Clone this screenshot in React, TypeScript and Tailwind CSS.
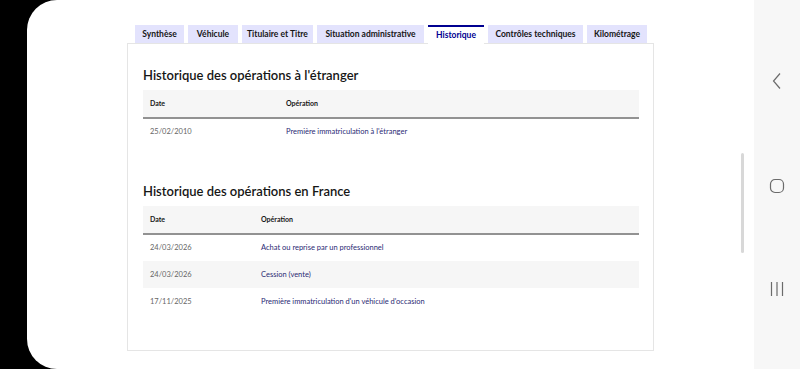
import React from 'react';

const tabs = [
  { label: 'Synthèse', w: 'w-[49px]' },
  { label: 'Véhicule', w: 'w-[50px]' },
  { label: 'Titulaire et Titre', w: 'w-[71px]' },
  { label: 'Situation administrative', w: 'w-[107px]' },
  { label: 'Historique', w: 'w-[56px]' },
  { label: 'Contrôles techniques', w: 'w-[95px]' },
  { label: 'Kilométrage', w: 'w-[60px]' },
];

interface Operation {
  date: string;
  label: string;
}

const foreignOps: Operation[] = [{ date: '25/02/2010', label: "Première immatriculation à l'étranger" }];

const franceOps: Operation[] = [
  { date: '24/03/2026', label: 'Achat ou reprise par un professionnel' },
  { date: '24/03/2026', label: 'Cession (vente)' },
  { date: '17/11/2025', label: "Première immatriculation d'un véhicule d'occasion" },
];

const OpsTable: React.FC<{ rows: Operation[]; dateCol: string }> = ({ rows, dateCol }) => (
  <table className="w-full table-fixed border-collapse text-left">
    <colgroup>
      <col className={dateCol} />
      <col />
    </colgroup>
    <thead>
      <tr className="bg-[#f6f6f6] border-b-2 border-[#929292] h-[28px]">
        <th className="pl-[7px] text-[7px] font-bold text-[#161616]">Date</th>
        <th className="text-[7px] font-bold text-[#161616]">Opération</th>
      </tr>
    </thead>
    <tbody>
      {rows.map((row, i) => (
        <tr key={i} className={`h-[27px] ${i % 2 === 1 ? 'bg-[#f6f6f6]' : 'bg-white'}`}>
          <td className="pl-[7px] text-[7.5px] text-[#666666]">{row.date}</td>
          <td className="text-[7.5px] text-[#2a2a74]">{row.label}</td>
        </tr>
      ))}
    </tbody>
  </table>
);

export default function App() {
  return (
    <div
      className="flex w-[800px] h-[369px] bg-black overflow-hidden"
      style={{ fontFamily: 'Lato, "Open Sans", sans-serif' }}
    >
      <div className="w-[27px] shrink-0" />

      {/* Screen */}
      <div className="relative flex-1 bg-white rounded-l-[30px] pl-[100px] pt-[25px]">
        <div className="w-[527px]">
          {/* Tabs */}
          <div className="flex gap-[4px] pl-[8px]">
            {tabs.map((t) =>
              t.label === 'Historique' ? (
                <div
                  key={t.label}
                  className={`${t.w} h-[19px] flex items-center justify-center whitespace-nowrap bg-white border-t-2 border-[#000091] text-[8.5px] font-bold text-[#000091] -mb-px relative z-10`}
                >
                  {t.label}
                </div>
              ) : (
                <div
                  key={t.label}
                  className={`${t.w} h-[18px] flex items-center justify-center whitespace-nowrap bg-[#e3e3fd] text-[8.5px] font-bold text-[#161616]`}
                >
                  {t.label}
                </div>
              )
            )}
          </div>

          {/* Panel */}
          <div className="border border-[#e5e5e5] h-[308px] px-[15px] pt-[20px]">
            <h2 className="text-[13px] font-semibold text-[#161616] leading-[22px]">
              Historique des opérations à l'étranger
            </h2>
            <div className="mt-[4px] mr-[-1px]">
              <OpsTable rows={foreignOps} dateCol="w-[143px]" />
            </div>

            <h2 className="mt-[35px] text-[13px] font-semibold text-[#161616] leading-[22px]">
              Historique des opérations en France
            </h2>
            <div className="mt-[4px] mr-[-1px]">
              <OpsTable rows={franceOps} dateCol="w-[118px]" />
            </div>
          </div>
        </div>

        {/* scrollbar */}
        <div className="absolute left-[714px] top-[153px] w-[3px] h-[100px] rounded-full bg-[#d8d8d8]" />
      </div>

      {/* Android nav bar */}
      <div className="w-[46px] shrink-0 bg-[#f7f7f7] flex flex-col items-center justify-between py-[72px]">
        <svg width="12" height="18" viewBox="0 0 12 18" fill="none" stroke="#6b6b6b" strokeWidth="1.2">
          <path d="M9 1.5 L2.5 9 L9 16.5" />
        </svg>
        <svg width="16" height="16" viewBox="0 0 16 16" fill="none" stroke="#6b6b6b" strokeWidth="1.2">
          <rect x="1.5" y="1.5" width="13" height="13" rx="4.5" />
        </svg>
        <svg width="16" height="16" viewBox="0 0 16 16" fill="none" stroke="#6b6b6b" strokeWidth="1.2">
          <path d="M2.5 1 V15 M8 1 V15 M13.5 1 V15" />
        </svg>
      </div>
    </div>
  );
}
